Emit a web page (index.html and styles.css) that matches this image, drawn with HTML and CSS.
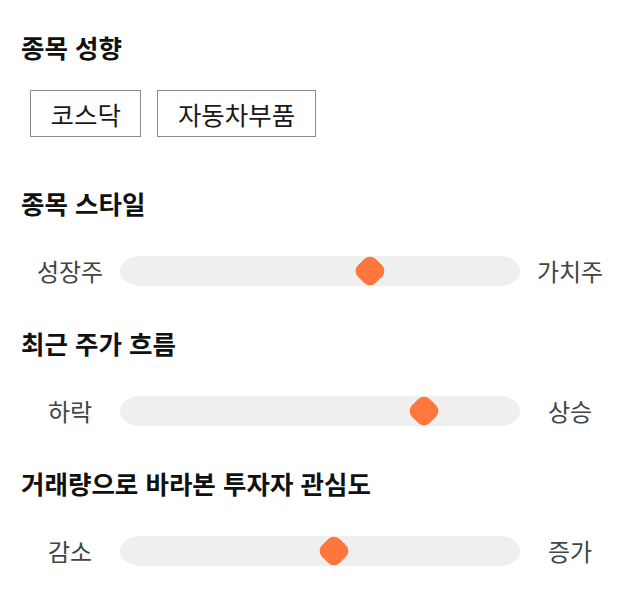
FILE: index.html
```html
<!DOCTYPE html>
<html lang="ko">
<head>
<meta charset="utf-8">
<link rel="stylesheet" href="styles.css">
</head>
<body>
<main class="page">
  <section class="section section-chips">
    <h2 class="title">종목 성향</h2>
    <div class="chips">
      <span class="chip">코스닥</span>
      <span class="chip">자동차부품</span>
    </div>
  </section>
  <section class="section">
    <h2 class="title">종목 스타일</h2>
    <div class="slider">
      <span class="label">성장주</span>
      <div class="track"><span class="thumb" style="left: 62.5%"></span></div>
      <span class="label">가치주</span>
    </div>
  </section>
  <section class="section">
    <h2 class="title">최근 주가 흐름</h2>
    <div class="slider">
      <span class="label">하락</span>
      <div class="track"><span class="thumb" style="left: 76%"></span></div>
      <span class="label">상승</span>
    </div>
  </section>
  <section class="section">
    <h2 class="title">거래량으로 바라본 투자자 관심도</h2>
    <div class="slider">
      <span class="label">감소</span>
      <div class="track"><span class="thumb" style="left: 53.5%"></span></div>
      <span class="label">증가</span>
    </div>
  </section>
</main>
</body>
</html>
```

FILE: styles.css
```css
html, body {
  margin: 0;
  padding: 0;
  background: #ffffff;
}
body {
  font-family: "Noto Sans CJK KR", "Noto Sans", sans-serif;
  color: #111;
}
.page {
  padding: 31px 20px 0 20px;
  display: flex;
  flex-direction: column;
  gap: 41px;
}
.section {
  display: flex;
  flex-direction: column;
  gap: 37px;
}
.section-chips {
  gap: 27px;
  margin-bottom: 9px;
}
.title {
  margin: 0;
  padding-left: 1px;
  font-size: 25.5px;
  font-weight: 700;
  line-height: 32px;
  color: #111;
}
.chips {
  display: flex;
  gap: 16px;
  padding-left: 10px;
}
.chip {
  display: inline-flex;
  align-items: center;
  justify-content: center;
  height: 45px;
  padding: 0 19.5px;
  border: 1px solid #8a8a8a;
  font-size: 25.5px;
  color: #1a1a1a;
}
.slider {
  display: grid;
  grid-template-columns: 100px 400px 100px;
  align-items: center;
  height: 30px;
}
.label {
  text-align: center;
  font-size: 24px;
  line-height: 30px;
  color: #444;
}
.track {
  position: relative;
  height: 30px;
  background: #efefef;
  border-radius: 20px / 15px;
}
.thumb {
  position: absolute;
  top: 50%;
  width: 25px;
  height: 25px;
  background: #ff773d;
  border-radius: 8px;
  transform: translate(-50%, -50%) rotate(45deg);
}
```
